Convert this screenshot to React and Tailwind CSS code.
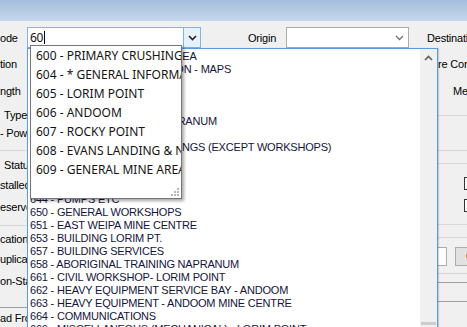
import React from "react";

const listItems = [
  "600 - PRIMARY CRUSHING AREA",
  "604 - * GENERAL INFORMATION - MAPS",
  "605 - LORIM POINT",
  "606 - ANDOOM",
  "607 - ROCKY POINT",
  "608 - EVANS LANDING & NAPRANUM",
  "609 - GENERAL MINE AREA",
  "640 - GENERAL PLANT BUILDINGS (EXCEPT WORKSHOPS)",
  "641 - OFFICES",
  "642 - CRIB ROOMS",
  "643 - STORES",
  "644 - PUMPS ETC",
  "650 - GENERAL WORKSHOPS",
  "651 - EAST WEIPA MINE CENTRE",
  "653 - BUILDING LORIM PT.",
  "657 - BUILDING SERVICES",
  "658 - ABORIGINAL TRAINING NAPRANUM",
  "661 - CIVIL WORKSHOP- LORIM POINT",
  "662 - HEAVY EQUIPMENT SERVICE BAY - ANDOOM",
  "663 - HEAVY EQUIPMENT - ANDOOM MINE CENTRE",
  "664 - COMMUNICATIONS",
  "666 - MISCELLANEOUS (MECHANICAL) - LORIM POINT",
];

const popupItems = [
  "600 - PRIMARY CRUSHING AREA",
  "604 - * GENERAL INFORMATION - MAPS",
  "605 - LORIM POINT",
  "606 - ANDOOM",
  "607 - ROCKY POINT",
  "608 - EVANS LANDING & NAPRANUM",
  "609 - GENERAL MINE AREA",
];

function Chevron({ color = "#222", w = 1.6 }) {
  return (
    <svg width="9" height="6" viewBox="0 0 9 6">
      <polyline points="1,1 4.5,4.5 8,1" fill="none" stroke={color} strokeWidth={w} />
    </svg>
  );
}

function Line({ mt, color = "bg-[#d9d9d9]" }) {
  return <div className={`h-px w-full shrink-0 ${color}`} style={{ marginTop: mt }} />;
}

export default function App() {
  const lbl = "h-[14px] leading-[14px] whitespace-nowrap text-[11px] tracking-[-0.2px] text-black";
  return (
    <div className="relative w-[467px] h-[327px] overflow-hidden bg-[#f0f0f0] font-['Liberation_Sans',Arial,sans-serif]">
      {/* title strip */}
      <div className="h-[21px] bg-gradient-to-b from-[#a6bedc] to-[#c4d7ed]" />

      {/* row 1 */}
      <div className="flex items-center h-[21px] mt-[6px]">
        <div className={`w-[27px] shrink-0 overflow-hidden ${lbl}`}>ode</div>
        <div className="w-[174px] h-[21px] shrink-0 flex border border-[#7eb4ea] bg-white">
          <div className="flex-1 flex items-center pl-[2px] text-[12px] font-['Noto_Sans',sans-serif] text-[#111]">
            <span className="tracking-[-0.3px]">60</span>
            <span className="ml-px w-px h-[13px] bg-black" />
          </div>
          <div className="w-[17px] h-full border-l border-[#7eb4ea] bg-[#e5f1fb] flex items-center justify-center">
            <Chevron />
          </div>
        </div>
        <div className="w-[47px] shrink-0" />
        <div className={`w-[38px] shrink-0 ${lbl}`}>Origin</div>
        <div className="w-[123px] h-[21px] shrink-0 border border-[#adadad] bg-white flex items-center justify-end pr-[4px]">
          <Chevron color="#707070" w={1.3} />
        </div>
        <div className="w-[18px] shrink-0" />
        <div className={lbl}>Destination</div>
      </div>

      {/* body */}
      <div className="flex">
        {/* left labels */}
        <div className="w-[27px] shrink-0 overflow-hidden flex flex-col">
          <div className={`${lbl} mt-[9px]`}>tion</div>
          <div className={`${lbl} mt-[13px]`}>ngth</div>
          <div className={`${lbl} mt-[10px] pl-[4px]`}>Type</div>
          <div className={`${lbl} mt-[4px]`}>- Power</div>
          <Line mt={10} />
          <div className={`${lbl} mt-[7px] pl-[4px]`}>Status</div>
          <div className={`${lbl} mt-[6px]`}>stalled</div>
          <div className={`${lbl} mt-[8px]`}>eserved</div>
          <Line mt={11} />
          <div className={`${lbl} mt-[6px]`}>cation</div>
          <div className={`${lbl} mt-[6px]`}>uplicate</div>
          <div className={`${lbl} mt-[8px]`}>on-Stand</div>
          <Line mt={19} color="bg-[#a0a0a0]" />
          <div className={`${lbl} mt-[3px]`}>ad From</div>
        </div>

        {/* middle (covered by list) */}
        <div className="w-[410px] shrink-0" />

        {/* right column */}
        <div className="w-[30px] shrink-0 overflow-hidden flex flex-col">
          <div className={`${lbl} mt-[9px] pl-[1px]`}>re Condition</div>
          <div className={`${lbl} mt-[13px] pl-[16px]`}>Meter</div>
          <Line mt={17} />
          <Line mt={34} />
          <Line mt={12} />
          <div className="mt-[13px] ml-[27px] w-[13px] h-[13px] shrink-0 border border-[#333] bg-white" />
          <div className="mt-[9px] ml-[27px] w-[13px] h-[13px] shrink-0 border border-[#333] bg-white" />
          <Line mt={12} />
          <Line mt={12} />
          <div className="mt-[9px] flex h-[19px] shrink-0">
            <div className="w-[10px] h-full shrink-0 border border-l-0 border-[#adadad] bg-white" />
            <div className="ml-[8px] w-[40px] h-full shrink-0 border border-[#adadad] bg-[#e1e1e1] text-[11px] leading-[17px] pl-[10px] text-[#222] whitespace-nowrap">Clear</div>
          </div>
          <Line mt={7} />
          <Line mt={8} color="bg-[#a0a0a0]" />
          <Line mt={18} color="bg-[#a0a0a0]" />
        </div>
      </div>

      {/* dropdown list (overlay) */}
      <div className="absolute left-[27px] top-[48px] w-[411px] h-[300px] border border-[#5a9be0] bg-white flex shadow-[1px_0_1px_rgba(0,0,0,0.15)]">
        <div className="flex-1 overflow-hidden pt-[1px] pl-[2px]">
          {listItems.map((t) => (
            <div key={t} className="h-[13px] leading-[13px] whitespace-nowrap text-[11px] tracking-[-0.2px] text-[#14143c]">
              {t}
            </div>
          ))}
        </div>
        <div className="w-[17px] h-full bg-[#f0f0f0] flex flex-col items-center">
          <div className="mt-[6px] rotate-180">
            <Chevron color="#606060" w={1.6} />
          </div>
          <div className="mt-auto mb-[22px] w-[15px] h-[3px] bg-[#cdcdcd]" />
        </div>
      </div>

      {/* autocomplete popup (overlay) */}
      <div className="absolute left-[30px] top-[45px] w-[152px] h-[154px] border border-[#767676] bg-white shadow-[2px_2px_3px_rgba(0,0,0,0.35)] overflow-hidden">
        {popupItems.map((t) => (
          <div key={t} className="h-[19px] leading-[19px] pl-[5px] whitespace-nowrap text-[12px] font-['Noto_Sans',sans-serif] text-[#151515]">
            {t}
          </div>
        ))}
        <svg className="absolute right-[1px] bottom-[1px]" width="10" height="10" viewBox="0 0 10 10">
          <g fill="#b8b8b8">
            <rect x="7" y="1" width="2" height="2" />
            <rect x="4" y="4" width="2" height="2" />
            <rect x="7" y="4" width="2" height="2" />
            <rect x="1" y="7" width="2" height="2" />
            <rect x="4" y="7" width="2" height="2" />
            <rect x="7" y="7" width="2" height="2" />
          </g>
        </svg>
      </div>
    </div>
  );
}
